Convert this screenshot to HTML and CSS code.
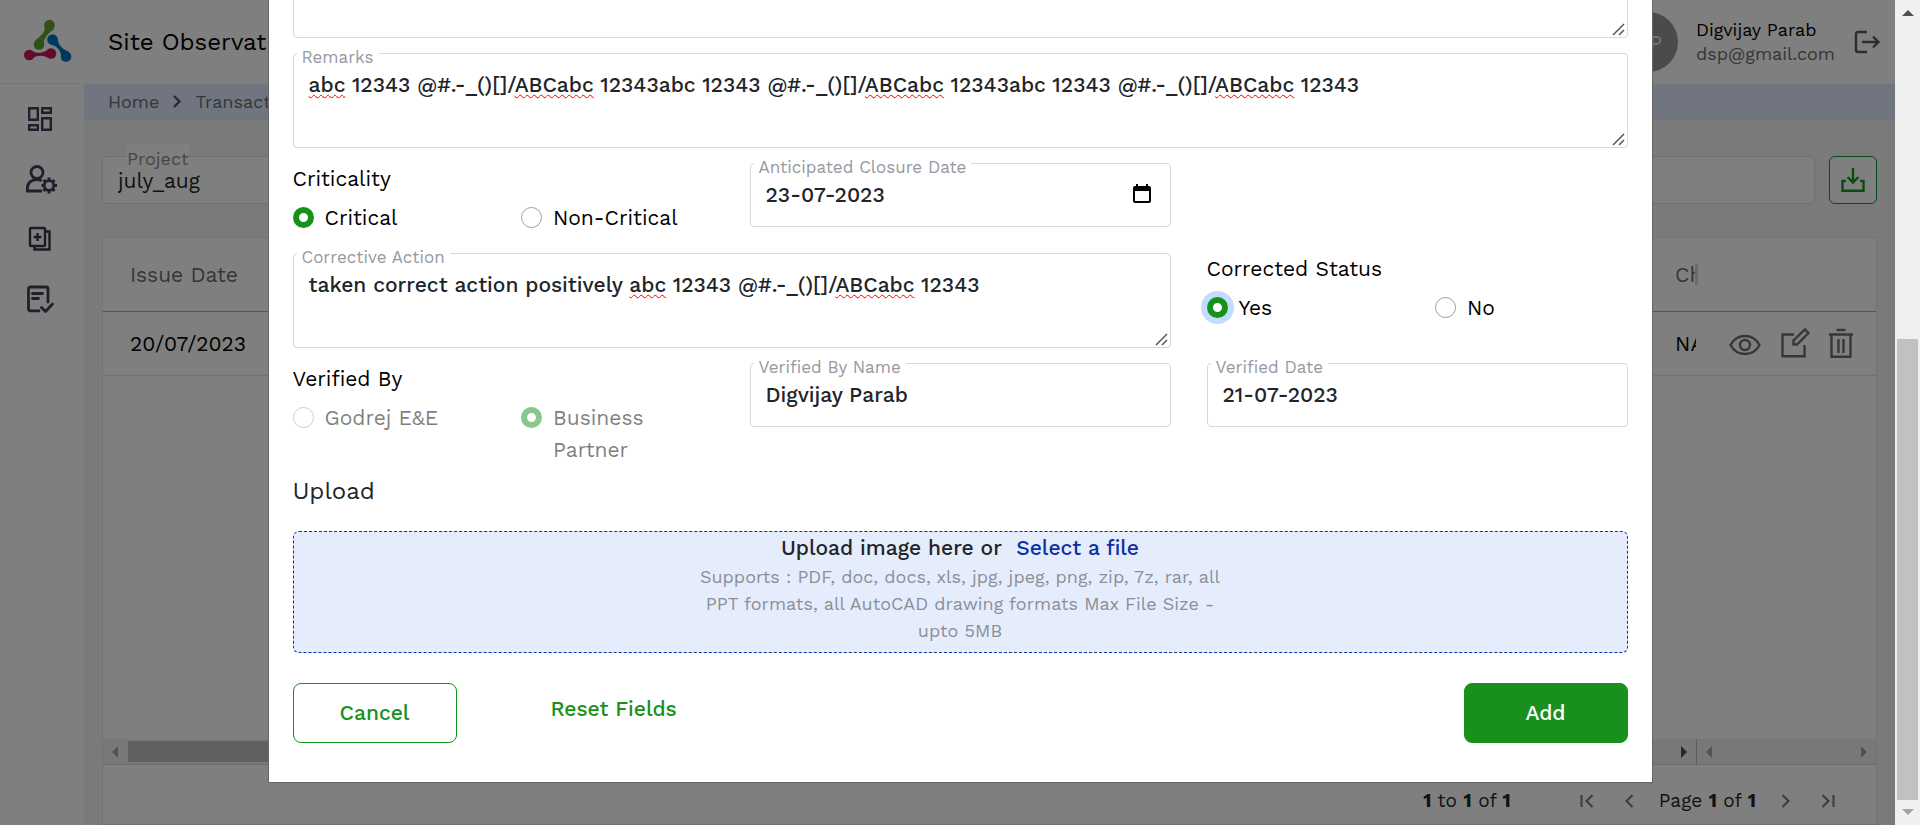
FILE: index.html
```html
<!DOCTYPE html>
<html lang="en">
<head>
<meta charset="utf-8">
<title>Site Observation</title>
<link rel="stylesheet" href="styles.css">
</head>
<body>
<div class="app">
  <nav class="sidebar" aria-label="Main">
    <a class="logo" href="#" aria-label="Home">
      <svg width="48" height="44" viewBox="0 0 48 44">
        <g fill="#64a033"><circle cx="25.500" cy="5" r="5.300"/><circle cx="15" cy="24.500" r="5.300"/><path d="M20.300 6c2 6-3 9-9 14.500l8.500 6.500c-1-7 2-12 10.500-18z"/></g>
        <g fill="#c2185b"><circle cx="5.300" cy="35" r="5.300"/><circle cx="27" cy="33.500" r="5.300"/><path d="M6.500 30c5 4 13 4 19-1.500v10c-6-4-14-4-19 1.500z"/></g>
        <g fill="#0072bc"><circle cx="28.500" cy="19.500" r="5.300"/><circle cx="42" cy="36.500" r="5.300"/><path d="M33.500 18c1 8 5 11 11 13.500l-7 8c0-8-3-13-11-15z"/></g>
      </svg>
    </a>
    <a class="nav-item" href="#" aria-label="Dashboard">
      <svg width="32" height="32" viewBox="0 0 32 32" fill="none" stroke="#3c4257" stroke-width="2.400"><path d="M5.200 5.200h8.600v11.600H5.200zM18.200 5.200h8.600v4.600h-8.600zM18.200 15.200h8.600v11.600h-8.600zM5.200 22.200h8.600v4.600H5.200z"/></svg>
    </a>
    <a class="nav-item" href="#" aria-label="User settings">
      <svg width="32" height="32" viewBox="0 0 32 32" fill="none" stroke="#3c4257" stroke-width="2.800"><circle cx="13" cy="9.500" r="6"/><path d="M18 28H3.400v-3c0-5 4-8.500 9.300-8.500 2 0 3.500.4 5 1.200"/><circle cx="25" cy="22.500" r="4.800"/><path stroke-width="3" d="M25 14.500v3M25 27.500v3M17.500 22.500h2.500M30 22.500h3M19.500 17l2 2M28.500 26l2 2M19.500 28l2-2M28.500 19l2-2"/></svg>
    </a>
    <a class="nav-item" href="#" aria-label="Add record">
      <svg width="32" height="32" viewBox="0 0 32 32" fill="none" stroke="#333847" stroke-width="2.400"><rect x="6" y="5" width="15" height="18" rx="1"/><path d="M22 8.500h3.500V26.500H10.500V24M13.500 10v8M9.500 14h8"/></svg>
    </a>
    <a class="nav-item" href="#" aria-label="Checklist">
      <svg width="32" height="32" viewBox="0 0 32 32" fill="none" stroke="#3c4257" stroke-width="2.800" stroke-linecap="round" stroke-linejoin="round"><path d="M15 27.800H6.500q-2 0-2-2V6q0-2 2-2H22q2 0 2 2v13M8.500 10.500h10M8.500 15.500h6M17.500 24.500l4 4 7-7.500"/></svg>
    </a>
  </nav>
  <div class="main">
    <header class="topbar">
      <h1 class="title">Site Observation</h1>
      <div class="user">
        <span class="avatar">DP</span>
        <div class="who"><div class="name">Digvijay Parab</div><div class="mail">dsp@gmail.com</div></div>
        <button class="icon-btn" type="button" aria-label="Log out">
          <svg width="26" height="24" viewBox="0 0 26 24" fill="none" stroke="#5a5a5e" stroke-width="2.400"><path d="M13 2H4Q2 2 2 4v16q0 2 2 2h9M8 12h17M19 6.500l5.500 5.500-5.500 5.500"/></svg>
        </button>
      </div>
    </header>
    <div class="crumbs">
      <a href="#">Home</a>
      <svg width="10" height="14" viewBox="0 0 10 14" fill="none" stroke="#555" stroke-width="2.400"><path d="M2 2l5.500 5.500L2 13"/></svg>
      <a href="#">Transaction</a>
    </div>
    <div class="content">
      <div class="filters">
        <div class="filter"><label for="project">Project</label><input id="project" type="text" value="july_aug"></div>
        <div class="filter"><input type="text" aria-label="Search"></div>
        <button class="export" type="button" aria-label="Download">
          <svg width="26" height="26" viewBox="0 0 26 26" fill="none" stroke="#159a1f" stroke-width="2.400"><path d="M6 14H2.500v9.800h21V14H20M13 1v14M7.500 10l5.500 5.500 5.500-5.500"/></svg>
        </button>
      </div>
      <section class="grid-box">
        <table class="grid">
          <thead><tr><th>Issue Date</th><th class="narrow"><div class="clip head-clip">Ch</div></th><th class="actions-col"></th></tr></thead>
          <tbody><tr><td>20/07/2023</td><td class="narrow"><div class="clip">NA</div></td><td class="actions-col"><div class="actions">
            <button class="icon-btn" type="button" aria-label="View"><svg width="32" height="30" viewBox="0 0 32 30" fill="none" stroke="#6c6f76" stroke-width="2.400"><path d="M1.500 17C8 5 24 5 30.500 17 24 29 8 29 1.500 17z"/><circle cx="16" cy="17" r="5"/></svg></button>
            <button class="icon-btn" type="button" aria-label="Edit"><svg width="30" height="30" viewBox="0 0 30 30" fill="none" stroke="#6c6f76" stroke-width="2.400"><path d="M14 6.500H2.500v21.800h22V17M13.500 16.500v-4L25 1.500l3.500 3.500-11.500 11.500z"/></svg></button>
            <button class="icon-btn" type="button" aria-label="Delete"><svg width="26" height="30" viewBox="0 0 26 30" fill="none" stroke="#6c6f76" stroke-width="2.400"><path d="M1 6.500h24M3.500 6.500v22.300h19V6.500M8.500 2h9M10.500 11v14M15.500 11v14"/></svg></button>
          </div></td></tr></tbody>
        </table>
        <div class="hscrolls" aria-hidden="true">
          <div class="hscroll wide"><i class="arrow left"></i><i class="hthumb"></i><i class="arrow right dark"></i></div>
          <div class="hscroll pinned"><i class="arrow left"></i><i class="arrow right"></i></div>
        </div>
        <div class="paging">
          <span class="range"><b>1</b> to <b>1</b> of <b>1</b></span>
          <button class="icon-btn" type="button" aria-label="First page"><svg width="14" height="14" viewBox="0 0 14 14"><path d="M1.500 1v12M12.500 1l-6 6 6 6"/></svg></button>
          <button class="icon-btn prev" type="button" aria-label="Previous page"><svg width="10" height="14" viewBox="0 0 10 14"><path d="M8.500 1l-6 6 6 6"/></svg></button>
          <span class="page">Page <b>1</b> of <b>1</b></span>
          <button class="icon-btn next" type="button" aria-label="Next page"><svg width="10" height="14" viewBox="0 0 10 14"><path d="M1.500 1l6 6-6 6"/></svg></button>
          <button class="icon-btn" type="button" aria-label="Last page"><svg width="14" height="14" viewBox="0 0 14 14"><path d="M1.500 1l6 6-6 6M12.500 1v12"/></svg></button>
        </div>
      </section>
    </div>
  </div>
</div>

<div class="overlay">
  <form class="dialog" role="dialog" aria-modal="true" aria-label="Site observation">
    <div class="form-grid">
      <div class="field span3"><textarea aria-label="Observation"></textarea></div>
      <div class="field span3">
        <label for="remarks">Remarks</label>
        <div class="marks" aria-hidden="true"><u>abc</u> 12343 @#.-_()[]/<u>ABCabc</u> 12343abc 12343 @#.-_()[]/<u>ABCabc</u> 12343abc 12343 @#.-_()[]/<u>ABCabc</u></div>
        <textarea id="remarks" spellcheck="false">abc 12343 @#.-_()[]/ABCabc 12343abc 12343 @#.-_()[]/ABCabc 12343abc 12343 @#.-_()[]/ABCabc 12343</textarea>
      </div>
      <fieldset class="choice tall">
        <legend>Criticality</legend>
        <div class="options">
          <label><input type="radio" name="crit" checked>Critical</label>
          <label><input type="radio" name="crit">Non-Critical</label>
        </div>
      </fieldset>
      <div class="field">
        <label for="closure">Anticipated Closure Date</label>
        <input id="closure" type="text" value="23-07-2023">
        <button class="icon-btn calendar" type="button" aria-label="Pick a date"><svg width="18" height="20" viewBox="0 0 18 20"><path d="M3 0h2v2h8V0h2v2h1q2 0 2 2v13q0 2-2 2H2q-2 0-2-2V4q0-2 2-2h1zM2 7v10h14V7z" fill="#000" fill-rule="evenodd"/></svg></button>
      </div>
      <div class="field span2">
        <label for="action">Corrective Action</label>
        <div class="marks" aria-hidden="true">taken correct action positively <u>abc</u> 12343 @#.-_()[]/<u>ABCabc</u></div>
        <textarea id="action" spellcheck="false">taken correct action positively abc 12343 @#.-_()[]/ABCabc 12343</textarea>
      </div>
      <fieldset class="choice">
        <legend>Corrected Status</legend>
        <div class="options">
          <label><input class="ringed" type="radio" name="status" checked>Yes</label>
          <label><input type="radio" name="status">No</label>
        </div>
      </fieldset>
      <fieldset class="choice" disabled>
        <legend>Verified By</legend>
        <div class="options">
          <label><input type="radio" name="by">Godrej E&amp;E</label>
          <label><input type="radio" name="by" checked><span>Business Partner</span></label>
        </div>
      </fieldset>
      <div class="field"><label for="vname">Verified By Name</label><input id="vname" type="text" value="Digvijay Parab"></div>
      <div class="field"><label for="vdate">Verified Date</label><input id="vdate" type="text" value="21-07-2023"></div>
    </div>
    <h2 class="upload-title">Upload</h2>
    <div class="drop">
      <p class="drop-main">Upload image here or <a href="#">Select a file</a></p>
      <p class="drop-note">Supports : PDF, doc, docs, xls, jpg, jpeg, png, zip, 7z, rar, all PPT formats, all AutoCAD drawing formats Max File Size - upto 5MB</p>
    </div>
    <div class="buttons">
      <button class="btn outline" type="button">Cancel</button>
      <button class="reset" type="reset">Reset Fields</button>
      <button class="btn solid" type="submit">Add</button>
    </div>
  </form>
</div>
<div class="vscroll" aria-hidden="true"><i class="up"></i><i class="vthumb"></i><i class="down"></i></div>
</body>
</html>
```
FILE: styles.css
```css
* { box-sizing: border-box; }
body { margin: 0; height: 100vh; overflow: hidden; font-family: "Work Sans", Inter, sans-serif; font-size: 21px; color: #212529; }
button, input, textarea { font: inherit; color: inherit; margin: 0; }
a { color: inherit; text-decoration: none; }
p, h1, h2 { margin: 0; font-weight: 400; }
svg { display: block; overflow: visible; }
.icon-btn { border: 0; padding: 0; background: none; }

/* page behind the dialog */
.app { display: flex; height: 100vh; padding-right: 25px; background: #f4f4f4; }
.sidebar { width: 84px; flex: none; background: #fff; display: flex; flex-direction: column; align-items: center; gap: 28px; padding-right: 4px; }
.logo { align-self: stretch; height: 84px; padding: 20px 0 0 24px; border-bottom: 1px solid #ececec; }
.nav-item { width: 32px; height: 32px; }
.logo + .nav-item { margin-top: -9px; }
.main { flex: 1; min-width: 0; display: flex; flex-direction: column; }
.topbar { height: 84px; flex: none; background: #fff; display: flex; align-items: center; justify-content: space-between; padding: 0 15px 0 24px; }
.title { font-size: 24px; color: #000; }
.user { display: flex; align-items: center; }
.avatar { width: 60px; height: 60px; border-radius: 50%; background: #96979b; color: #e8e8e8; display: flex; align-items: center; justify-content: center; }
.who { width: 158px; margin-left: 18px; font-size: 18px; line-height: 24px; }
.name { color: #000; }
.mail { color: #6c6c70; }
.crumbs { height: 36px; flex: none; background: #e2eaff; display: flex; align-items: center; gap: 13px; padding: 0 0 2px 24px; font-size: 18px; color: #6a6d75; }
.content { flex: 1; padding: 36px 18px 0; display: flex; flex-direction: column; gap: 33px; }
.filters { display: flex; }
.filter { flex: 1; position: relative; }
.filter input { width: 100%; height: 48px; border: 1px solid #dfdfdf; border-radius: 5px; padding: 0 15px; background: #fff; }
.filter label { position: absolute; left: 25px; top: -12px; padding-top: 4px; background: #fff; color: #8d8d92; font-size: 18px; line-height: 22px; }
.export { width: 48px; height: 48px; margin-left: 14px; flex: none; border: 1px solid #009640; border-radius: 6px; background: #fff; display: flex; align-items: center; justify-content: center; }
.grid-box { flex: 1; background: #fff; border: 1px solid #e6e6e6; display: flex; flex-direction: column; }
.grid { width: 100%; border-collapse: collapse; table-layout: fixed; }
.grid th, .grid td { padding: 0 0 0 27px; text-align: left; font-weight: 400; }
.grid th { height: 73px; border-bottom: 1px solid #a8a8a8; color: #6d6d72; }
.grid td { height: 64px; border-bottom: 1px solid #e4e4e4; color: #000; }
.grid .narrow { width: 49px; }
.grid .actions-col { width: 179px; padding: 0 22px 0 32px; }
.clip { width: 21px; overflow: hidden; white-space: nowrap; }
.head-clip { width: 23px; border-right: 3px solid #cfd6e4; line-height: 21px; }
.actions { display: flex; align-items: center; justify-content: space-between; }
.hscrolls { margin-top: auto; display: flex; height: 26px; border-bottom: 1px solid #d8d8d8; background: #f0f0f0; }
.hscroll { display: flex; align-items: center; padding: 0 9px; }
.wide { flex: 1; }
.pinned { width: 180px; border-left: 1px solid #bbb; justify-content: space-between; }
.hthumb { width: 700px; height: 21px; margin: 0 auto 0 10px; background: #c1c1c1; }
.arrow { border: 6px solid transparent; border-width: 6px 0; }
.arrow.left { border-right: 6px solid #a3a3a3; }
.arrow.right { border-left: 6px solid #a3a3a3; }
.arrow.dark { border-left-color: #505050; }
.paging { height: 59px; flex: none; display: flex; align-items: center; justify-content: flex-end; padding: 12px 41px 0 0; font-size: 19px; }
.paging svg { fill: none; stroke: #777; stroke-width: 2; }
.range { margin-right: 69px; }
.prev { margin: 0 25px 0 30px; }
.next { margin: 0 30px 0 25px; }

/* dialog */
.overlay { position: fixed; inset: 0; overflow: hidden; display: flex; align-items: flex-end; justify-content: center; padding-bottom: 42px; background: rgba(0, 0, 0, .5); }
.dialog { width: 100%; max-width: 1385px; background: #fff; border: 1px solid #666; padding: 24px 24px 39px; color: #000; }
.form-grid { display: grid; grid-template-columns: repeat(3, 1fr); column-gap: 36px; row-gap: 15px; }
.field { position: relative; align-self: start; }
.span3 { grid-column: span 3; }
.span2 { grid-column: 1 / span 2; }
.field > label { position: absolute; z-index: 1; left: 4px; top: -8px; padding: 0 5px; background: #fff; color: #96999f; font-size: 17px; line-height: 24px; }
.field input, .field textarea, .marks { display: block; width: 100%; border: 1px solid #d9d9d9; border-radius: 4px; padding: 16px 15px; line-height: 30px; font-weight: 500; color: #212529; }
.field input { height: 64px; padding: 15px 15px 17px; background: #fff; }
.field textarea { position: relative; height: 95px; background: transparent; resize: vertical; }
.field textarea::-webkit-resizer { background: url("data:image/svg+xml,%3Csvg xmlns='http://www.w3.org/2000/svg' viewBox='0 0 15 15'%3E%3Cpath d='M1 13L12 2M7 13l5-5' stroke='%23555' stroke-width='1.500'/%3E%3C/svg%3E") center / 15px 15px no-repeat; }
.field .marks { position: absolute; inset: 0; overflow: hidden; border-color: transparent; color: transparent; }
.marks u { text-decoration: underline wavy #f00 1px; text-underline-offset: 2px; text-decoration-skip-ink: none; }
.calendar { position: absolute; right: 20px; top: 21px; }
.choice { border: 0; margin: 0; padding: 0; min-width: 0; }
.tall { min-height: 75px; }
.choice legend { padding: 0; line-height: 32px; }
.options { display: grid; grid-template-columns: 1fr 1fr; column-gap: 36px; padding-top: 7px; line-height: 32px; }
.options label { display: flex; gap: 11px; white-space: nowrap; }
.options span { white-space: normal; width: 130px; }
.options input { appearance: none; flex: none; width: 21px; height: 21px; margin-top: 5px; border: 1px solid #999ca1; border-radius: 50%; background: #fff; }
.options input:checked { border: 6px solid #18911c; }
.options .ringed { box-shadow: 0 0 0 6px #c2dbfe; }
.choice:disabled label { opacity: .5; }
.upload-title { margin: 9px 0 24px; font-size: 24px; line-height: 32px; color: #212529; }
.drop { border: 1px dashed #0a32a8; border-radius: 6px; background: #e5edfd; text-align: center; padding-bottom: 8px; }
.drop-main { line-height: 31px; font-weight: 500; color: #212529; }
.drop-main a { margin-left: 8px; color: #0a32a8; }
.drop-note { max-width: 545px; margin: 0 auto; font-size: 18px; line-height: 27px; color: #8c8f96; }
.buttons { display: flex; align-items: center; padding-top: 30px; }
.btn { width: 164px; height: 60px; border: 1px solid #18911c; border-radius: 8px; padding: 0 0 2px; font-weight: 500; }
.outline { background: #fff; color: #18911c; }
.solid { margin-left: auto; background: #18911c; color: #fff; }
.reset { margin-left: 94px; padding: 0 0 10px; border: 0; background: none; color: #18911c; font-weight: 500; }

.vscroll { position: fixed; top: 0; right: 0; bottom: 0; width: 25px; background: #f0f0f0; display: flex; flex-direction: column; align-items: center; padding: 10px 0; }
.vthumb { width: 21px; height: 461px; margin: auto 0 9px; background: #c1c1c1; }
.up, .down { border: 6px solid transparent; border-top-width: 0; border-bottom: 6px solid #505050; }
.down { border-bottom-width: 0; border-top: 6px solid #a3a3a3; }
```
